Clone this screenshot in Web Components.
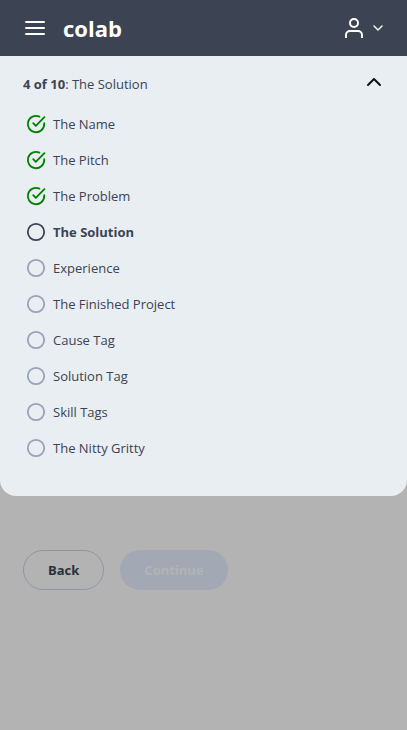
<!DOCTYPE html>
<html lang="en">
<head>
<meta charset="utf-8">
<meta name="viewport" content="width=device-width, initial-scale=1">
<title>colab</title>
<style>
  html, body { margin: 0; }
  body { background: #b3b3b3; color: #3c4353; font: 13px/20px "Open Sans", sans-serif; }
</style>
</head>
<body>
<colab-page></colab-page>

<script>
const define = (name, html, setup) => customElements.define(name, class extends HTMLElement {
  connectedCallback() {
    if (this.shadowRoot) return;
    const template = document.createElement('template');
    template.innerHTML = html;
    this.attachShadow({ mode: 'open' }).append(template.content.cloneNode(true));
    if (setup) setup(this, this.shadowRoot);
  }
});

const reset = `
  button { font: inherit; color: inherit; margin: 0; padding: 0; border: 0; background: none; cursor: pointer; }
  svg { display: block; fill: none; stroke: currentColor; stroke-linecap: round; stroke-linejoin: round; }
`;

define('colab-header', `
  <style>${reset}
    :host { display: block; background: #3c4453; color: #fff; }
    header { display: flex; align-items: center; height: 56px; padding: 0 23px; }
    .menu { padding: 0 2px; }
    a { margin-left: 16px; color: inherit; text-decoration: none; font-size: 22px; line-height: 32px; font-weight: 700; }
    .account { display: flex; align-items: center; gap: 8px; margin-left: auto; }
  </style>
  <header>
    <button class="menu" aria-label="Menu">
      <svg width="20" height="16" viewBox="0 0 20 16" stroke-width="2"><path d="M1 2h18M1 8h18M1 14h18"/></svg>
    </button>
    <a href="#">colab</a>
    <button class="account" aria-label="Account">
      <svg width="20" height="24" viewBox="0 0 20 24" stroke-width="2"><circle cx="10" cy="7" r="4"/><path stroke-linecap="butt" d="M2 22v-3a4 4 0 0 1 4-4h8a4 4 0 0 1 4 4v3"/></svg>
      <svg width="12" height="8" viewBox="0 0 12 8" stroke-width="1.4"><path d="M2 2l4 4 4-4"/></svg>
    </button>
  </header>`);

define('progress-step', `
  <style>${reset}
    :host { display: flex; align-items: center; gap: 7px; height: 36px; }
    :host([state="current"]) { font-weight: 700; }
    svg { width: 20px; height: 20px; stroke-width: 1.8; color: #98a2b7; }
    :host([state="done"]) svg { color: #008000; }
    :host([state="current"]) svg { color: #3c4353; }
  </style>
  <svg viewBox="0 0 20 20" aria-hidden="true"></svg><span><slot></slot></span>`,
  (host, root) => {
    root.querySelector('svg').innerHTML = host.getAttribute('state') === 'done'
      ? '<path d="M18.2 9.2V10A8.2 8.2 0 1 1 13.4 2.6"/><path d="M7.2 9.2l2.6 2.6 8.6-8.7"/>'
      : '<circle cx="10" cy="10" r="8.2"/>';
  });

define('progress-panel', `
  <style>${reset}
    :host { display: block; padding: 18px 23px 30px; background: #e8eef2; border-radius: 0 0 16px 16px; }
    button { display: flex; align-items: center; justify-content: space-between; width: 100%; text-align: left; }
    button svg { color: #111; }
    nav { padding: 12px 3px 0; }
  </style>
  <button aria-expanded="true" aria-controls="steps">
    <span><slot name="summary"></slot></span>
    <svg width="20" height="20" viewBox="0 0 20 20" stroke-width="2"><path d="M4 11l6-6 6 6"/></svg>
  </button>
  <nav id="steps" aria-label="Project steps"><slot></slot></nav>`);

define('pill-button', `
  <style>${reset}
    :host { display: block; }
    button { display: block; height: 40px; padding: 0 24px; border: 1px solid #9096a3; border-radius: 20px; color: #2a303c; font-weight: 700; }
    button:disabled { border: 0; background: #a2a9b4; color: #b3b3b3; cursor: default; }
  </style>
  <button><slot></slot></button>`,
  (host, root) => { root.querySelector('button').disabled = host.hasAttribute('disabled'); });

define('colab-page', `
  <style>
    :host { display: block; min-height: 100vh; }
    footer { display: flex; gap: 16px; padding: 54px 23px; }
  </style>
  <colab-header></colab-header>
  <main>
    <progress-panel>
      <span slot="summary"><b>4 of 10</b>: The Solution</span>
      <progress-step state="done">The Name</progress-step>
      <progress-step state="done">The Pitch</progress-step>
      <progress-step state="done">The Problem</progress-step>
      <progress-step state="current">The Solution</progress-step>
      <progress-step>Experience</progress-step>
      <progress-step>The Finished Project</progress-step>
      <progress-step>Cause Tag</progress-step>
      <progress-step>Solution Tag</progress-step>
      <progress-step>Skill Tags</progress-step>
      <progress-step>The Nitty Gritty</progress-step>
    </progress-panel>
  </main>
  <footer>
    <pill-button>Back</pill-button>
    <pill-button disabled>Continue</pill-button>
  </footer>`);
</script>
</body>
</html>
